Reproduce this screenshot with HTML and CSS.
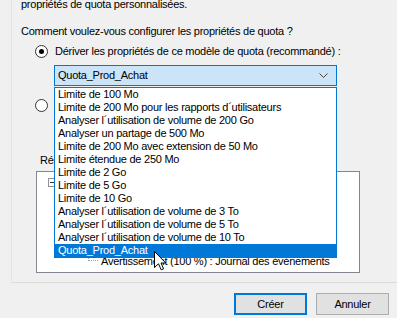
FILE: index.html
```html
<!DOCTYPE html>
<html lang="fr">
<head>
<meta charset="utf-8">
<title>Propriétés de quota</title>
<link rel="stylesheet" href="styles.css">
</head>
<body>
<div class="panel">
  <p class="intro">propriétés de quota personnalisées.</p>
  <p class="question">Comment voulez-vous configurer les propriétés de quota ?</p>
  <div class="radio-row first">
    <span class="radio checked"></span>
    <span class="radio-label">Dériver les propriétés de ce modèle de quota (recommandé) :</span>
  </div>
  <div class="combo">
    <span class="combo-text">Quota_Prod_Achat</span>
    <svg class="chevron" width="9" height="5" viewBox="0 0 9 5"><polyline points="0.5,0.5 4.5,4.5 8.5,0.5" fill="none" stroke="#444" stroke-width="1"/></svg>
  </div>
  <div class="radio-row second">
    <span class="radio"></span>
  </div>
  <p class="summary">Résumé des propriétés de quota :</p>
  <div class="tree">
    <div class="tree-root"><span class="expander"></span></div>
    <div class="tree-leaf"><span class="connector"></span><span>Avertissement (100 %) : Journal des événements</span></div>
  </div>

  <ul class="droplist">
    <li>Limite de 100 Mo</li>
    <li>Limite de 200 Mo pour les rapports d´utilisateurs</li>
    <li>Analyser l´utilisation de volume de 200 Go</li>
    <li>Analyser un partage de 500 Mo</li>
    <li>Limite de 200 Mo avec extension de 50 Mo</li>
    <li>Limite étendue de 250 Mo</li>
    <li>Limite de 2 Go</li>
    <li>Limite de 5 Go</li>
    <li>Limite de 10 Go</li>
    <li>Analyser l´utilisation de volume de 3 To</li>
    <li>Analyser l´utilisation de volume de 5 To</li>
    <li>Analyser l´utilisation de volume de 10 To</li>
    <li class="selected">Quota_Prod_Achat</li>
  </ul>
</div>
<div class="buttons">
  <button class="btn default">Créer</button>
  <button class="btn">Annuler</button>
</div>
<svg class="cursor" width="13" height="20" viewBox="0 0 13 20"><path d="M0.5,0.5 L0.5,16.5 L4.5,12.8 L7.2,18.8 L9.6,17.8 L7,12 L11.8,12 Z" fill="#fff" stroke="#000" stroke-width="1" stroke-linejoin="miter"/></svg>
</body>
</html>
```
FILE: styles.css
```css
html, body {
  margin: 0;
  padding: 0;
}
body {
  position: relative;
  width: 397px;
  height: 318px;
  overflow: hidden;
  background: #f0f0f0;
  font-family: "Liberation Sans", Arial, sans-serif;
  font-size: 11px;
  letter-spacing: -0.25px;
  color: #000;
}
p { margin: 0; }
.panel {
  position: relative;
  display: flex;
  flex-direction: column;
  align-items: flex-start;
  margin-left: 11px;
  width: 377px;
  height: 282px;
  border-left: 1px solid #e3e3e3;
  border-right: 1px solid #dadada;
  border-bottom: 1px solid #dadada;
  padding-left: 9px;
  box-sizing: content-box;
}
.intro {
  margin-top: -3px;
  line-height: 15px;
}
.question {
  margin-top: 12px;
  line-height: 15px;
}
.radio-row {
  display: flex;
  align-items: center;
  height: 15px;
  margin-left: 14px;
}
.radio-row.first { margin-top: 5px; }
.radio-row.second { margin-top: 12px; }
.radio {
  width: 11px;
  height: 11px;
  border: 1px solid #333;
  border-radius: 50%;
  background: #fff;
  position: relative;
  flex: none;
}
.radio.checked::after {
  content: "";
  position: absolute;
  left: 3px;
  top: 3px;
  width: 5px;
  height: 5px;
  border-radius: 50%;
  background: #000;
}
.radio-label {
  margin-left: 7px;
  line-height: 15px;
}
.combo {
  margin-top: 6px;
  margin-left: 33px;
  width: 270px;
  height: 19px;
  border: 1px solid #0078d7;
  background: #cce4f7;
  display: flex;
  align-items: center;
  justify-content: space-between;
  padding: 0 8px 0 3px;
  box-sizing: content-box;
}
.combo-text { line-height: 19px; }
.chevron { display: block; }
.summary {
  margin-top: 40px;
  margin-left: 19px;
  line-height: 15px;
}
.tree {
  margin-top: 3px;
  margin-left: 15px;
  border: 1px solid #828790;
  background: #fff;
  padding: 6px 0 0 11px;
  box-sizing: border-box;
  width: 324px;
  height: 102px;
  display: flex;
  flex-direction: column;
  align-items: flex-start;
}
.tree-root { height: 9px; }
.expander {
  display: block;
  width: 7px;
  height: 7px;
  border: 1px solid #919191;
  position: relative;
}
.expander::after {
  content: "";
  position: absolute;
  left: 1px;
  top: 3px;
  width: 5px;
  height: 1px;
  background: #333;
}
.tree-leaf {
  margin-top: 66px;
  margin-left: 40px;
  height: 16px;
  display: flex;
  align-items: center;
  line-height: 16px;
}
.connector {
  width: 10px;
  height: 14px;
  margin-top: -14px;
  margin-right: 3px;
  border-left: 1px dotted #a0a0a0;
  border-bottom: 1px dotted #a0a0a0;
  box-sizing: border-box;
}
.droplist {
  position: absolute;
  left: 42px;
  top: 87px;
  width: 281px;
  margin: 0;
  padding: 0;
  list-style: none;
  border: 1px solid #0078d7;
  background: #fff;
}
.droplist li {
  height: 13px;
  line-height: 13px;
  padding-left: 3px;
  white-space: nowrap;
  overflow: hidden;
}
.droplist li.selected {
  background: #0078d7;
  color: #fff;
}
.buttons {
  display: flex;
  justify-content: flex-end;
  gap: 9px;
  margin-top: 10px;
  margin-right: 8px;
}
.btn {
  width: 73px;
  height: 22px;
  margin: 0;
  padding: 0;
  font-family: inherit;
  font-size: 11px;
  letter-spacing: -0.25px;
  color: #000;
  background: #e1e1e1;
  border: 1px solid #adadad;
  box-sizing: border-box;
}
.btn.default {
  border: 2px solid #0078d7;
}
.cursor {
  position: absolute;
  left: 154px;
  top: 251px;
}
```
